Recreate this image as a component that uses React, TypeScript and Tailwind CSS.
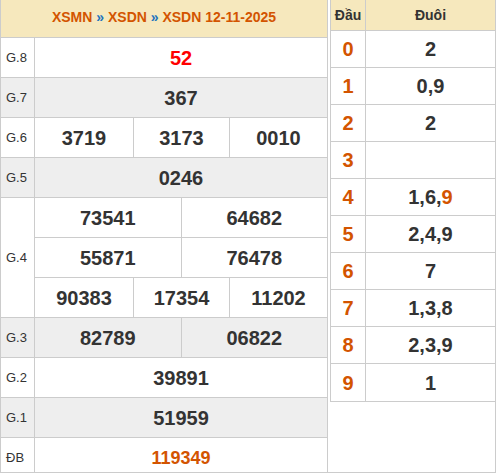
import React from 'react'

type Cell = { v: string; w?: string }

const font = "font-['Liberation_Sans',Arial,sans-serif]"

function ValueRow({
  cells,
  color = 'text-[#333]',
  size = 'text-[20px]',
  last,
}: {
  cells: Cell[]
  color?: string
  size?: string
  last?: boolean
}) {
  return (
    <div className={`flex h-[40px] ${last ? '' : 'border-b border-[#ccc]'}`}>
      {cells.map((c, i) => (
        <div
          key={i}
          className={`${c.w ?? 'flex-1'} flex items-center justify-center ${size} font-bold ${color} ${
            i > 0 ? 'border-l border-[#ccc]' : ''
          }`}
        >
          {c.v}
        </div>
      ))}
    </div>
  )
}

function Prize({
  label,
  rows,
  gray,
  color,
  size,
  last,
}: {
  label: string
  rows: Cell[][]
  gray?: boolean
  color?: string
  size?: string
  last?: boolean
}) {
  return (
    <div className={`flex ${gray ? 'bg-[#eeeeee]' : 'bg-white'}`}>
      <div
        className={`w-[34px] shrink-0 flex items-center pl-[5px] text-[13px] text-[#333] border-r border-[#ccc] ${
          last ? '' : 'border-b'
        }`}
      >
        {label}
      </div>
      <div className="flex-1 flex flex-col">
        {rows.map((r, i) => (
          <ValueRow key={i} cells={r} color={color} size={size} last={last && i === rows.length - 1} />
        ))}
      </div>
    </div>
  )
}

const two = (a: string, b: string): Cell[] => [{ v: a }, { v: b }]
const three = (a: string, b: string, c: string): Cell[] => [
  { v: a, w: 'w-[98px]' },
  { v: b, w: 'w-[96px]' },
  { v: c, w: 'flex-1' },
]

const loto: [string, React.ReactNode][] = [
  ['0', '2'],
  ['1', '0,9'],
  ['2', '2'],
  ['3', ''],
  ['4', <>1,6,<span className="text-[#d35400]">9</span></>],
  ['5', '2,4,9'],
  ['6', '7'],
  ['7', '1,3,8'],
  ['8', '2,3,9'],
  ['9', '1'],
]

export default function App() {
  return (
    <div className={`${font} flex w-[496px] h-[473px] bg-white border-x border-b border-[#ccc]`}>
      <div className="w-[327px] h-[472px] overflow-hidden border-r border-[#ccc] flex flex-col">
        <div className="h-[38px] shrink-0 bg-[#f6e8bd] border-b border-[#ccc] flex justify-center pt-[7px] text-[14px] font-bold text-[#d35400]">
          <span>
            XSMN <span className="text-[#1e73be]">»</span> XSDN <span className="text-[#1e73be]">»</span> XSDN 12-11-2025
          </span>
        </div>
        <Prize label="G.8" rows={[[{ v: '52' }]]} color="text-[#ff0000]" />
        <Prize label="G.7" rows={[[{ v: '367' }]]} gray />
        <Prize label="G.6" rows={[three('3719', '3173', '0010')]} />
        <Prize label="G.5" rows={[[{ v: '0246' }]]} gray />
        <Prize
          label="G.4"
          rows={[two('73541', '64682'), two('55871', '76478'), three('90383', '17354', '11202')]}
        />
        <Prize label="G.3" rows={[two('82789', '06822')]} gray />
        <Prize label="G.2" rows={[[{ v: '39891' }]]} />
        <Prize label="G.1" rows={[[{ v: '51959' }]]} gray />
        <Prize label="ĐB" rows={[[{ v: '119349' }]]} color="text-[#d35400]" size="text-[18px]" last />
      </div>

      <div className="ml-[2px] w-[165px]">
        <div className="border-l border-b border-[#ccc]">
          <div className="flex h-[31px] bg-[#f6e8bd] border-b border-[#ccc] text-[14px] font-bold text-[#333]">
            <div className="w-[35px] border-r border-[#ccc] flex justify-center pt-[5px]">Đầu</div>
            <div className="flex-1 flex justify-center pt-[5px]">Đuôi</div>
          </div>
          {loto.map(([d, t], i) => (
            <div
              key={d}
              className={`flex h-[37px] text-[20px] font-bold ${i < loto.length - 1 ? 'border-b border-[#ccc]' : ''}`}
            >
              <div className="w-[35px] border-r border-[#ccc] flex items-center justify-center text-[#d35400]">{d}</div>
              <div className="flex-1 flex items-center justify-center text-[#333]">{t}</div>
            </div>
          ))}
        </div>
      </div>
    </div>
  )
}
